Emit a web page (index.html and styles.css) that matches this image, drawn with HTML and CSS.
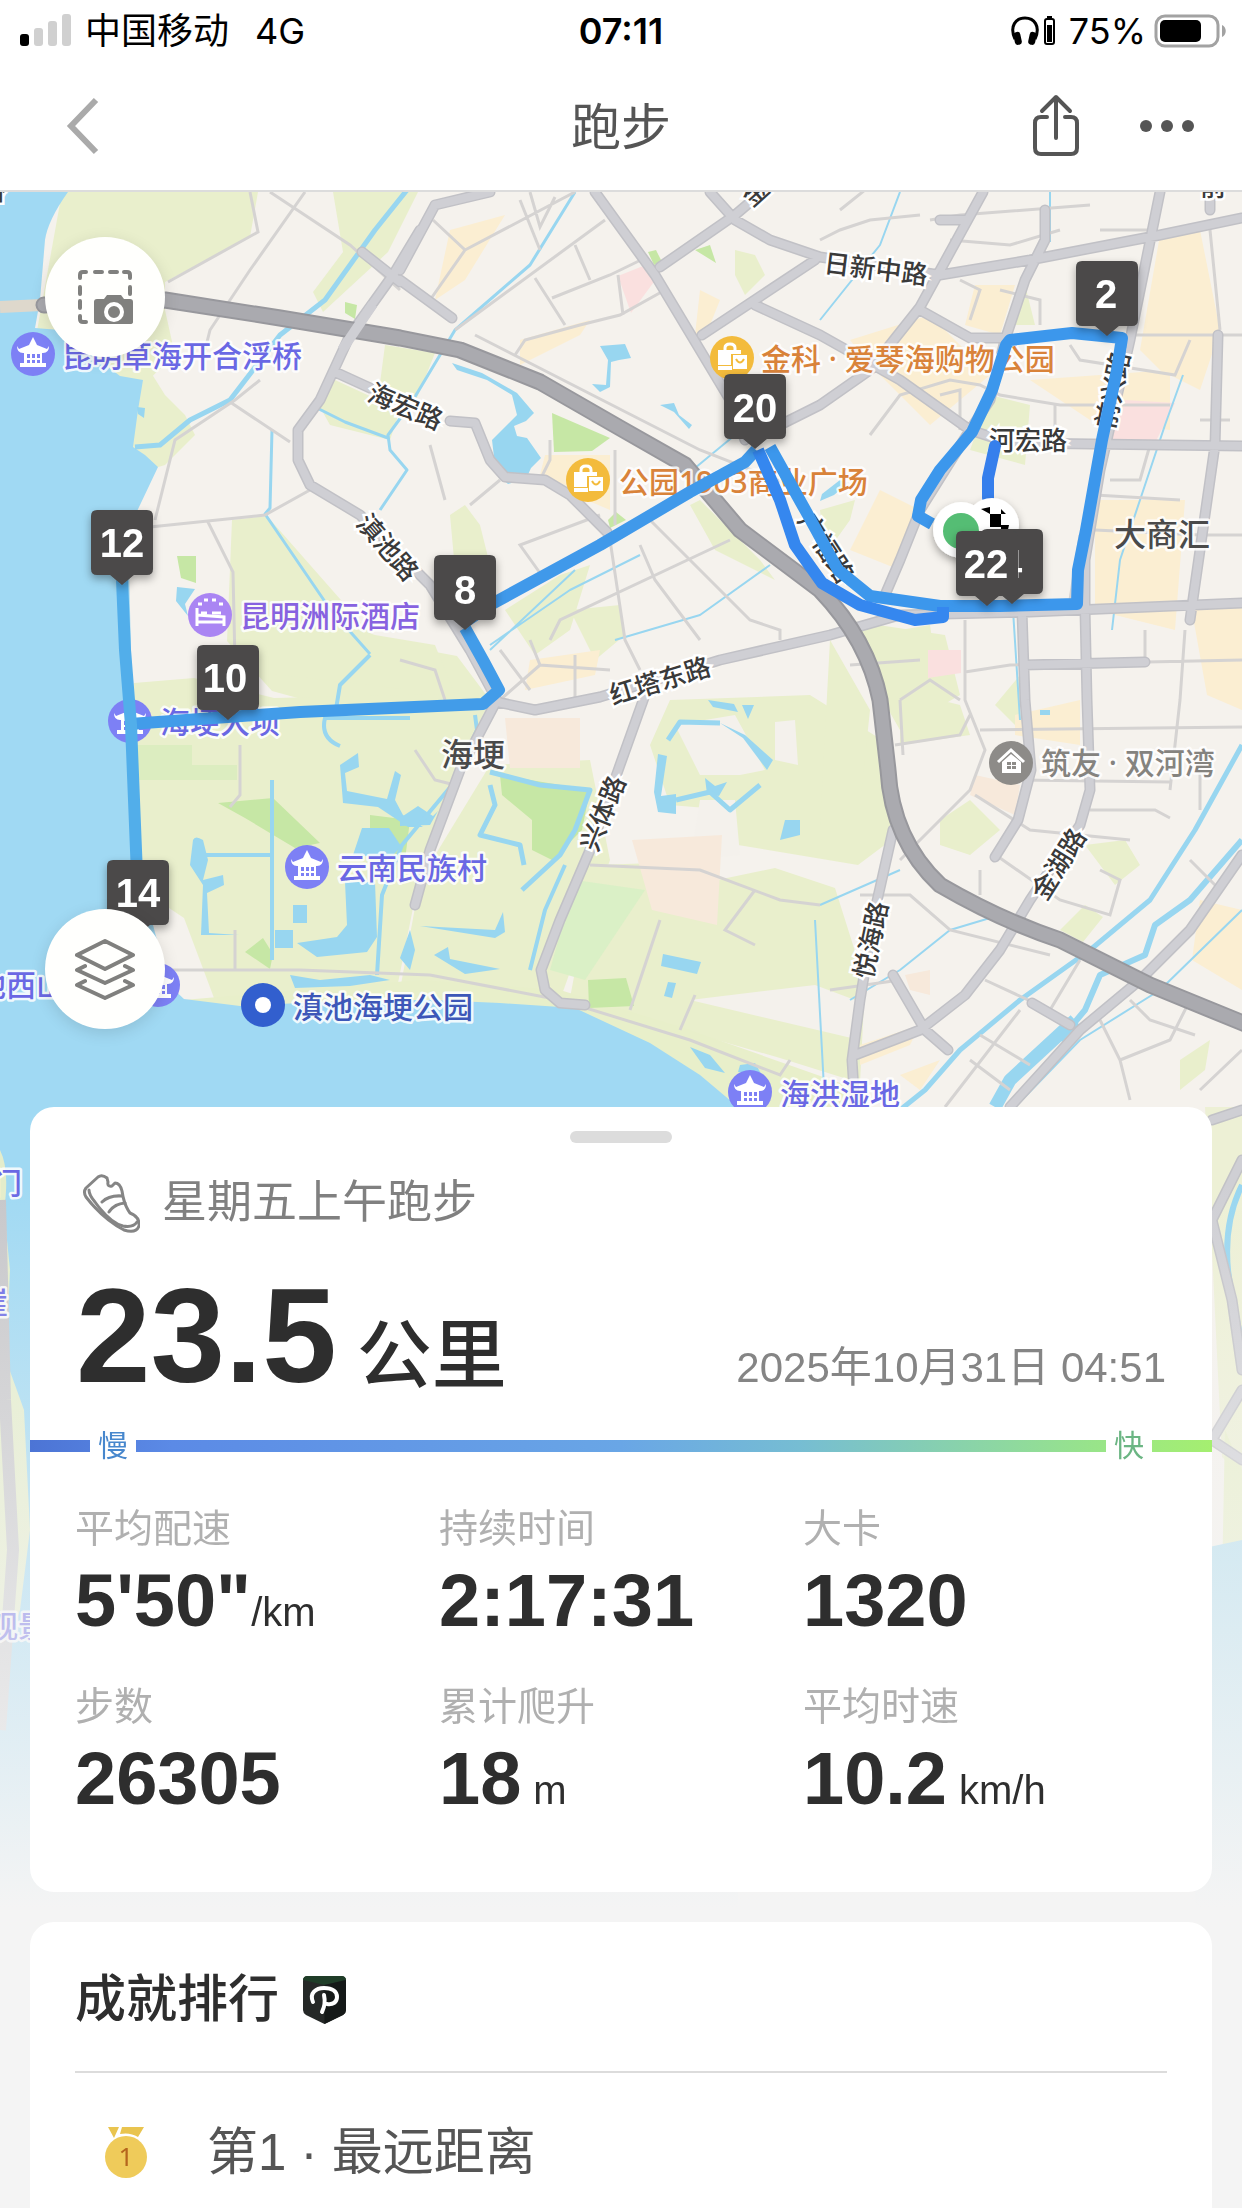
FILE: index.html
```html
<!DOCTYPE html>
<html lang="zh-CN">
<head>
<meta charset="utf-8">
<meta name="viewport" content="width=device-width, initial-scale=1">
<title>跑步</title>
<link rel="stylesheet" href="styles.css">
</head>
<body>
<div class="status">
  <div class="status-side">
    <svg class="signal" width="51" height="34" viewBox="0 0 51 34" aria-hidden="true">
      <rect x="0" y="20" width="9" height="12" rx="3" fill="#000"/>
      <rect x="14" y="14" width="9" height="18" rx="3" fill="#d0d0d0"/>
      <rect x="28" y="7" width="9" height="25" rx="3" fill="#d0d0d0"/>
      <rect x="42" y="0" width="9" height="32" rx="3" fill="#d0d0d0"/>
    </svg>
    <span>中国移动</span>
    <span class="network">4G</span>
  </div>
  <time class="clock">07:11</time>
  <div class="status-side status-end">
    <svg width="46" height="32" viewBox="0 0 46 32" aria-hidden="true">
      <path d="M4 24C-2 11 5 3 14 3s16 8 10 21" fill="none" stroke="#000" stroke-width="3"/>
      <rect x="3" y="17" width="7" height="13" rx="3" transform="rotate(-12 6 23)"/>
      <rect x="18" y="17" width="7" height="13" rx="3" transform="rotate(12 22 23)"/>
      <rect x="34" y="4" width="9" height="25" rx="2" fill="none" stroke="#000" stroke-width="2"/>
      <rect x="36" y="1" width="5" height="3"/><rect x="36" y="10" width="5" height="17"/>
    </svg>
    <span class="percent">75%</span>
    <svg width="74" height="34" viewBox="0 0 74 34" aria-hidden="true">
      <rect x="2" y="2" width="62" height="30" rx="9" fill="none" stroke="#a2a2a2" stroke-width="3"/>
      <rect x="6" y="6" width="41" height="22" rx="5"/>
      <path d="M68 11c5 2 5 10 0 12z" fill="#a2a2a2"/>
    </svg>
  </div>
</div>

<header class="nav">
  <button class="icon-button back" type="button" aria-label="返回">
    <svg width="36" height="60" viewBox="0 0 36 60"><path d="M30 4 5 30l25 26" fill="none" stroke="#aaa" stroke-width="6"/></svg>
  </button>
  <h1>跑步</h1>
  <div class="nav-actions">
    <button class="icon-button" type="button" aria-label="分享">
      <svg width="48" height="64" viewBox="0 0 48 64"><g fill="none" stroke="#555" stroke-width="4" stroke-linecap="round" stroke-linejoin="round"><path d="M15 23H9q-6 0-6 6v25q0 6 6 6h30q6 0 6-6V29q0-6-6-6h-6"/><path d="M24 44V4M10 17 24 3l14 14"/></g></svg>
    </button>
    <button class="icon-button" type="button" aria-label="更多">
      <svg width="54" height="14" viewBox="0 0 54 14" fill="#555"><circle cx="6" cy="7" r="6"/><circle cx="27" cy="7" r="6"/><circle cx="48" cy="7" r="6"/></svg>
    </button>
  </div>
</header>

<main class="stage">
<svg class="map" viewBox="0 192 1242 1716" role="img" aria-label="跑步路线地图">
  <defs>
    <g id="temple"><circle r="22" fill="#7d80f5"/><path d="M0-17 4-9 14-5 16-8q0 7-6 7H9V9h4v4h-26V9h4V-1h-1q-6 0-6-7l2 3 10-4z" fill="#fff"/><path d="M-6 0h3v4h-3zM-1 0h3v4h-3zM4 0h3v4H4zM-6 6h3v3h-3zM-1 6h3v3h-3zM4 6h3v3H4z" fill="#7d80f5"/></g>
    <g id="shop"><circle r="22" fill="#f3bb3c"/><path d="M-7-8v-2q0-4 5-4t5 4v2" fill="none" stroke="#fff" stroke-width="3"/><path d="M-14-8H9v4H-1V7h-13z" fill="#fff"/><path d="M-14 8H0v4h-14zM1-3h14v14H1z" fill="#fff"/><path d="M4 1q4 7 8 0" fill="none" stroke="#f3bb3c" stroke-width="2"/></g>
    <g id="pin"><path d="M-25-75h50q6 0 6 6v53q0 6-6 6H12L0 0-12-10h-13q-6 0-6-6v-53q0-6 6-6z" fill="#4b4a4a"/></g>
    <linearGradient id="fade" x1="0" y1="0" x2="0" y2="1"><stop offset="0" stop-color="#f4f4f4" stop-opacity="0"/><stop offset="1" stop-color="#f4f4f4"/></linearGradient>
    <filter id="shade" x="-30%" y="-30%" width="160%" height="170%"><feDropShadow dx="0" dy="4" stdDeviation="4" flood-opacity=".35"/></filter>
  </defs>
  <rect y="192" width="1242" height="1716" fill="#f5f2ed"/>

  <!-- parks and fields -->
  <g fill="#e9efcc">
    <path d="M62 192h196l-8 45-85 45v28l10 45-30 28-22 90-90-120z"/>
    <path d="M140 355l25 40 20 20 10 20-30 30-40 12z"/>
    <path d="M333 192h85l-30 60-65 60-10-20 30-40z"/>
    <path d="M335 380l65 30-10 30-60-15-10-18zM385 345l50 8-20 50-35-20z"/>
    <path d="M232 520l35-4 110 125 80 15 30 40-160 10-55-15-45-50z"/>
    <path d="M134 683l60-5 80 20 220-5-45 90-35 120-20 100-180-5-30-80-45-30z"/>
    <path d="M240 670l75-55 60 20 60 10 20 50z"/>
    <path d="M505 610l55-35 30-10-20 65-35 25zM570 610l50-5 5 30-30 25z"/>
    <path d="M490 765l100-5 20 100-50 140-160-10 20-110z"/>
    <path d="M450 515l15-10 15 20 15 60-40-15z"/>
    <path d="M670 700l140-5 80 50 8 90-40 30-120-20-8-35-60-5-20-60z"/>
    <path d="M595 865l60-2 0 30 120-25 60 20 30 95-5 100-80-25-210-60z"/>
    <path d="M845 620l100 15 15 60-60 35-40-70zM830 640l40 70-10 95-40 20zM900 690l60 15 10 30-70 10z"/>
    <path d="M995 705l25-30v55zM940 820l30-20 30 30-30 25-30-10zM1085 845l40-5 15 25-25 20zM1060 930l25-25 18 12-20 25z"/>
    <path d="M735 250l20 5 10 20-20 20-10-20zM820 510l35-10-5 20-25 35zM700 500l60 60 15 20-60-30-25-45zM1005 325l20-40 10 40zM990 395l40 10-5 60-55-15z"/>
    <path d="M870 635l60-10 5 35-60 5zM1180 1060l30-20-5 30-25 20z"/>
  </g>
  <path d="M160 1002 300 990 420 980 560 990 690 1030 860 1090V1110H738L700 1080 600 1030 500 1020 160 1020z" fill="#e8efca"/>
  <path d="M675 725 735 715 765 770 740 775 700 775zM690 860 740 855 735 800 700 800zM775 722 795 720 798 765 775 760zM815 985 855 1000 860 1040 690 1000z" fill="#f4f1ec"/>
  <g fill="#c6e7a5">
    <path d="M552 413l58 25-18 13-38 1z"/><path d="M177 556h19v27l-15-5z"/><path d="M218 803l55-5 47 45-25 5-50-30z"/>
    <path d="M500 775l90 15-8 40-30 30-20-10 0-30-30-25z"/><path d="M370 815l40 5-5 40-35-10z"/><path d="M245 952l18-14 10 16-3 15z"/><path d="M588 980l38-2 8 28-45 2z"/>
    <path d="M648 252l8-2 6 12-8 3zM695 250l15-5 6 18zM345 302l12 3-2 14-10-6zM608 520l8-8 10 8-16 8z"/>
  </g>
  <path d="M137 745h55v20h45v15H137z" fill="#dcedc0"/><path d="M575 880l70 10-60 90-35-10z" fill="#daf0c6"/>
  <g fill="#fbeed2">
    <path d="M450 230l55-15-40 65-30 20zM520 340l70-20-10 15-60 30zM545 455l65 0v55l-35-15-10-10-25-10zM530 660l70-10-5 25-70 15zM700 290l20 10-10 25-15 10z"/>
    <path d="M1160 235l40-5 20 100-20 60-40-20-20-20zM975 285l40 0-15 50-35-10zM1030 380l140-10 0 60-80-10zM850 340l80-25 60 60-60 50-60-60zM1095 500h90l-10 130-80-20zM1190 600h52v110l-35-15zM880 490l40 20-20 60-50-20zM1200 900l42 10v80l-50-30zM1015 715l65-15v45l-65-10z"/>
    <path d="M860 1045l60-20-10 20-50 20zM900 1075l40-15-20 30z"/>
  </g>
  <path d="M618 276l30-12 8 15-25 34zM1125 400l50 3-20 40-45 0zM928 650h33v23l-33 5z" fill="#fae0df"/>
  <path d="M505 718h75v50h-70zM632 840l90-5-5 90-65-15zM975 775l45 10-5 30-45-20zM905 975l25-5v25l-20-5z" fill="#f7e9db"/>

  <!-- lake -->
  <path d="M0 192h68Q48 220 45 240L40 300l-5 28 25 2 60 46 23 4-5 30-5 37 12 8 13 12-18 38-12 25 5 200 8 150 28 105 15 14L240 1006 300 1003 380 1000 433 1000 500 1003 575 1008 605 1022 650 1043 700 1075 738 1107V1908H0z" fill="#a0d9f3"/>
  <path d="M0 1150q10 20 4 60l6 60-4 90 18 50 6 120-10 80-20 60z" fill="#e4edcb"/>
  <path d="M1205 1107h37v370l-20-20-17-350z" fill="#edf0d5"/><path d="M1225 1430l17 40v160l-20-50z" fill="#e8efca"/>
  <path d="M1195 1550l47-10v368h-47z" fill="#b5dfef"/>

  <!-- ponds and rivers -->
  <g fill="#98d6f0">
    <path d="M452 363l30 10 35 20 17 20-8 8-12 5 3 10 10 2 7 10 7 10-10 10-5 11-18 5-12-10-4-34 25-25-5-20-25-15-30-10z"/>
    <path d="M600 346l25-2 6 14-12 2-8 2-1 25-10 5-8-8 14 1 2-25z"/><path d="M660 405l14-2 5 12 13 10-3 4-15-17z"/>
    <path d="M177 587l18 2-10 15 3 12-12-15z"/><path d="M137 407l8 1-1 10-6-4z"/><path d="M822 494l18-14 8 3-14 12-14 6z"/>
    <path d="M362 828l27 0 12 18-10 12-38-3z"/><path d="M345 882l30 0 2 55-10 15-50 5-20-14 40-6 10-12z"/>
    <path d="M275 930h18v18h-18zM293 905h14v18h-14z"/><path d="M663 954l38 8-4 12-36-8zM668 982l8 1-4 15-8-2z"/>
    <path d="M340 765l18-12 1 14-14 6 2 18 40 8 8-28 6 4-6 25 8 15 20 12-15 0-30-20-35-4z"/>
    <path d="M193 840q2-5 10 0l5 20-5 20 20-5 1 10-17 8 2 40 30 2-38 0 2-50-13-20z"/>
    <path d="M410 930l5 20-5 20-10-12zM434 955l14-8 2 12 30 6 20 4-35 5z"/><path d="M290 975l30 5 50-5 20 5-40 6-55 2z"/>
    <path d="M420 926l75 4 8-18 2 20-10 6zM418 806l-18 12 0 8 30-1 8-14-5 5z"/>
    <path d="M708 700l26 4 4 8-25-5zM742 705h12l-6 14zM720 723l25 12 28 25-6 10-24-32z"/>
    <path d="M658 754l9 2-6 40 15-2 0 20-18-2-4-20z"/><path d="M785 820l15 0 0 15-20 5zM705 778l10 8 12-4-8 14-12-2z"/>
    <path d="M690 1047l20 8 15 18-20-5zM740 1065l15-2 8 14-25-5z"/>
    <path d="M1040 710h10v5h-10z"/>
  </g>
  <g fill="none" stroke="#98d6f0" stroke-linejoin="round">
    <path d="M407 190 375 230 325 300 280 335 230 400 190 420 160 445 135 447" stroke-width="5"/>
    <path d="M575 192 530 265 455 330 410 405 388 435 390 450 407 470 380 510M315 407 345 422 388 438M272 430l-2 78-5 6 65 95 40 45" stroke-width="3"/>
    <path d="M490 785 495 805 480 835 520 845 524 865M490 772 540 785 590 790 575 830 560 855 522 890M668 740 680 722 720 723M676 800 710 792 730 810 760 785" stroke-width="5"/>
    <path d="M565 865 545 910 530 970M272 780v180M205 855h65M410 718H325q-5 20 15 28M475 715l2 15-25 55-50 60-20 50-5 80M370 655l-30 30-5 30" stroke-width="4"/>
    <path d="M900 192 880 245 840 295 820 320M1050 192v50M735 435 695 468M490 645 570 590 640 555M1183 375 1165 425 1140 500 1120 560 1112 630M575 570l-85 80M615 640 700 615 770 565M1013 610 1020 720" stroke-width="2"/>
    <path d="M1242 745 1195 830 1150 900 1090 950 1020 1000 960 1050 925 1090 900 1110" stroke-width="5"/>
    <path d="M1242 840 1190 900 1155 925 1145 955 1100 975 1085 1010 1060 1040" stroke-width="6"/>
    <path d="M1075 1020 1010 1080 995 1107" stroke-width="13"/>
    <path d="M1242 910 1160 990 1080 1040 1015 1107M820 905 900 870M1000 915 950 930 900 970 850 1000M815 920 825 1107" stroke-width="2"/>
    <path d="M1242 1185q-25 50-8 120l8 40" stroke-width="6"/>
  </g>

  <!-- minor streets -->
  <g fill="none" stroke="#d5d3d2" stroke-width="3">
    <path d="M305 192 250 270 210 330 205 350M250 192l8 40-90 50M270 192 350 245 400 290M150 527l115-12 45-25M208 522l25 50 2 90M155 520l20-80 60-40 25-20M230 402l60 40"/>
    <path d="M433 220 465 250 430 300M465 250 575 192M455 330 605 220M520 200 540 250M530 192l10 35 15-30M535 278 565 325M552 298 610 275 645 258M575 245 590 280M515 355 525 340 580 325 620 315 665 290M475 335 700 450 790 485M618 275l5 40M540 480l10-20 0-20M615 450v75M430 445 445 500M500 480 470 505M610 540 625 640 640 670M650 520 750 620 780 630 780 640M600 515 520 545 545 580M640 545 655 580 700 640M730 540 560 620 550 640"/>
    <path d="M400 660 435 670 445 700M500 650 530 690M530 640 540 665 610 670M575 655v50M500 700 540 665M240 745v50l-10 12M160 970 300 970 430 975 560 1000 690 1040 780 1075 790 1060M235 930v40M590 865 700 870 780 900 820 905M755 890 725 930 755 945M660 920 630 1010M415 750l20 30 20 5M695 995l-15 35"/>
    <path d="M820 240 840 230 870 220 920 215M840 210l25-20M930 220 960 215 1090 205M950 240 1010 245 1060 230M960 280 980 290 970 320M1000 290 1040 300 1040 325M870 435 900 395 950 380 980 385 1000 395 1060 405 1170 405M1070 345 1080 360 1175 375 1190 340M1055 405V450M960 430v-40l-20 5M1100 335H1242M1095 495 1180 500M1110 480 1140 480 1150 445M1210 230 1220 330M1150 230h-50M1200 420h30M1095 530 1200 535 1242 535M1080 535 1070 600"/>
    <path d="M965 620 965 700 985 750 970 790 930 830 900 860M850 665 920 660M965 672 1010 665 1242 660M895 745 960 735 970 715M980 730 1242 727M975 795 1030 830 1130 840M900 700 930 680 960 700M900 700l3 55M1185 630 1180 700 1170 790M1000 858 1060 900 1110 915 1120 880 1100 870M980 870 980 895M1145 630v30M1090 810h65l15 8M860 895 910 895 950 930 1050 955M830 990 900 980M1020 780 1170 782M1200 760v50"/>
    <path d="M985 980 1050 1010 1080 960M1030 1065 980 1035M1100 1020 1120 1060 1130 1100M1130 1000 1150 1020 1195 1035M1120 1060 1170 1040 1190 1000M1010 1090 970 1060M1190 860 1220 890M1242 1050 1200 1090M945 1107 1020 1010"/>
  </g>

  <!-- main roads: edge, then surface -->
  <g fill="none" stroke="#c1c1c6" stroke-width="11" stroke-linejoin="round" stroke-linecap="round">
    <path id="majors" d="M420 230 393 275 350 335 320 400 298 430V460L310 485 360 515 430 585 470 650 497 700 460 770 430 850 415 905M497 702 535 710 600 697 720 660 830 635 900 615 1030 612 1242 603M645 695 620 765 590 850 560 920 541 970 545 990 560 1003 585 1005M595 192 655 275 700 350 730 400 745 440M710 192 735 220 770 240 820 257 940 275 1030 260 1160 235 1242 218M660 267 735 215 755 198M702 335 815 260M755 305 820 335 900 380 970 430 1010 443 1242 446M983 192 920 307 870 370 820 405 780 425M1045 210V240L1025 280 1005 340 990 400 970 430 920 510 900 560 885 595M1160 192 1130 340 1100 470 1085 560V610L1087 700 1090 790 1080 825 1030 900 1000 950 965 995 920 1030 855 1055M920 310 970 338 1005 338M1218 335 1215 445 1190 620M1022 612 1025 700 1031 770 1018 820 995 857M893 830 875 910 860 1000 852 1060 855 1107M435 205 400 270M400 280 452 318M362 252 400 282M335 372 370 388M450 421 475 423 490 460 505 477 545 480 570 495 607 532M893 975 925 1030 948 1050M1032 1003 1070 1025M1024 665 1145 662M1242 855 1190 930 1140 980 1080 1030 1010 1107M1210 210V192M940 220h25M490 192 435 205M1242 1110 1212 1120M1242 1160 1212 1220 1232 1300 1242 1370M1242 1390 1212 1440 1242 1460"/>
  </g>
  <use href="#majors" fill="none" stroke="#cfcfd4" stroke-width="8" stroke-linejoin="round" stroke-linecap="round"/>
  <path d="M0 307 42 305" stroke="#ded8cc" stroke-width="12"/>
  <path d="M44 305 165 300 280 318 400 338 460 350 540 382 620 428 685 465 740 530 820 590Q868 640 880 700L888 770Q892 840 940 885 1000 920 1060 940L1150 985 1260 1030" fill="none" stroke="#98989d" stroke-width="17" stroke-linejoin="round" stroke-linecap="round"/>
  <path d="M44 305 165 300 280 318 400 338 460 350 540 382 620 428 685 465 740 530 820 590Q868 640 880 700L888 770Q892 840 940 885 1000 920 1060 940L1150 985 1260 1030" fill="none" stroke="#aaaaaf" stroke-width="13" stroke-linejoin="round" stroke-linecap="round"/>
  <path d="M373 304 342 350" stroke="#cfcfd4" stroke-width="10"/>
  <path d="M0 1200l5 200 8 150-13 180" fill="none" stroke="#c7c7ca" stroke-width="12"/>

  <!-- places -->
  <g class="poi poi-sight">
    <use href="#temple" x="33" y="354"/><text x="62" y="367">昆明草海开合浮桥</text>
    <use href="#temple" x="130" y="721"/><text x="160" y="733">海埂大坝</text>
    <use href="#temple" x="307" y="867"/><text x="337" y="879">云南民族村</text>
    <use href="#temple" x="750" y="1092"/><text x="780" y="1105">海洪湿地</text>
    <use href="#temple" x="158" y="985"/><text x="-24" y="996">池西山</text>
    <text x="-8" y="1194">门</text><text x="-22" y="1313">崖</text><text x="-12" y="1637">观景</text>
  </g>
  <g class="poi poi-hotel">
    <circle cx="210" cy="615" r="22" fill="#aa85f3"/><path d="M197 608v18m0-4h27m0 4v-9l-27-2" fill="none" stroke="#fff" stroke-width="3"/><path d="M201 613h6M212 613h9M198 604h4M204 600h4M212 600h4M219 604h4" stroke="#fff" stroke-width="3"/>
    <text x="240" y="627">昆明洲际酒店</text>
  </g>
  <g class="poi poi-shop">
    <use href="#shop" x="732" y="358"/><text x="761" y="370">金科 · 爱琴海购物公园</text>
    <use href="#shop" x="588" y="480"/><text x="619" y="493">公园1903商业广场</text>
  </g>
  <g class="poi poi-home">
    <circle cx="1011" cy="763" r="22" fill="#8d8b88"/><path d="M998 762l13-12 13 12" fill="none" stroke="#fff" stroke-width="3"/><path d="M1002 762l9-8 10 8v11h-19z" fill="#fff"/><path d="M1007 762h4v3h-4zM1012 762h4v3h-4zM1007 766h4v3h-4zM1012 766h4v3h-4z" fill="#8d8b88"/>
    <text x="1041" y="774">筑友 · 双河湾</text>
  </g>
  <g class="poi poi-metro"><circle cx="263" cy="1005" r="22" fill="#325fce"/><circle cx="263" cy="1005" r="8" fill="#fff"/><text x="293" y="1018">滇池海埂公园</text></g>
  <g class="poi poi-area"><text x="1114" y="546">大商汇</text><text x="441" y="766">海埂</text></g>

  <g class="street">
    <text x="823" y="272" transform="rotate(7 823 272)">日新中路</text>
    <text x="366" y="400" transform="rotate(23 366 400)">海宏路</text>
    <text x="355" y="524" transform="rotate(49 355 524)">滇池路</text>
    <text x="613" y="705" transform="rotate(-17 613 705)">红塔东路</text>
    <text x="597" y="853" transform="rotate(-68 597 853)">兴体路</text>
    <text x="1046" y="902" transform="rotate(-58 1046 902)">金湖路</text>
    <text x="872" y="980" transform="rotate(-78 872 980)">悦海路</text>
    <text x="1114" y="430" transform="rotate(-78 1114 430)">前兴路</text>
    <text x="797" y="520" transform="rotate(57 797 520)">广福路</text>
    <text x="989" y="450">河宏路</text>
    <text x="752" y="208" transform="rotate(-42 752 208)">金</text>
    <text x="1200" y="196">前</text><text x="-20" y="200">桥</text>
  </g>

  <!-- route -->
  <g fill="none" stroke="#3c97ec" stroke-width="12" stroke-linejoin="round">
    <path d="M932 524 918 516 921 500 940 470 972 432 992 390 1006 345 1010 340 1072 333 1122 338 1117 370 1102 440 1086 530 1078 570 1077 604 1000 606 940 606 870 596 838 570 808 515 770 447"/>
    <path d="M756 450 745 462 690 492 600 545 490 605 465 622" stroke="#4099ea"/>
    <path d="M465 628 484 662 499 690 483 704 300 712 130 724" stroke="#429ce9"/>
    <path d="M122 580 125 650 131 725 138 900" stroke="#52aeea"/>
    <path d="M758 450 780 500 795 545 822 583 860 605 915 620 943 617 943 607" stroke="#3587ef"/>
    <path d="M995 446 988 478 988 498" stroke="#367fec" stroke-linecap="round"/>
  </g>
  <g filter="url(#shade)"><circle cx="992" cy="525" r="27" fill="#fff"/><circle cx="961" cy="530" r="28" fill="#fff"/></g>
  <path d="M981 509l9-2v7zM990 514h11v13h-11zM1001 514v-5l5 5zM1001 525h8l-2 9h-6z"/>
  <circle cx="961" cy="531" r="18" fill="#55bd74"/>

  <g class="km" filter="url(#shade)">
    <use href="#pin" x="122" y="585"/><text x="122" y="557">12</text>
    <use href="#pin" x="228" y="720"/><text x="225" y="692">10</text>
    <use href="#pin" x="138" y="935"/><text x="138" y="907">14</text>
    <use href="#pin" x="465" y="630"/><text x="465" y="604">8</text>
    <use href="#pin" x="755" y="449"/><text x="755" y="422">20</text>
    <use href="#pin" x="1107" y="336"/><text x="1106" y="308">2</text>
    <use href="#pin" x="1012" y="604"/><text x="1000" y="578">24</text>
    <use href="#pin" x="987" y="606"/><text x="986" y="578">22</text>
  </g>
  <rect y="1180" width="1242" height="728" fill="url(#fade)"/>
</svg>

<div class="content">
  <div class="map-controls">
    <button class="round" type="button" aria-label="截图">
      <svg width="56" height="56" viewBox="0 0 56 56"><g fill="none" stroke="#80807e" stroke-width="4" stroke-linecap="round"><path d="M3 9V6q0-3 3-3h3M18 3h7M33 3h7M47 3h3q3 0 3 3v3M53 18v7M3 18v7M3 32v7M3 47v3q0 3 3 3h3"/></g><path d="M17 33q0-3 3-3h7l3-4h14l3 4h6q3 0 3 3v20q0 2-3 2H20q-3 0-3-2z" fill="#80807e"/><circle cx="37" cy="43" r="8" fill="none" stroke="#fff" stroke-width="4"/></svg>
    </button>
    <button class="round" type="button" aria-label="图层">
      <svg width="62" height="64" viewBox="0 0 62 64"><g fill="none" stroke="#80807e" stroke-width="4" stroke-linejoin="round" stroke-linecap="round"><path d="M31 4 59 18 31 32 3 18zM11 29l-8 4 28 13 28-13-8-4M11 44l-8 4 28 13 28-13-8-4"/></g></svg>
    </button>
  </div>

  <section class="card summary">
    <div class="handle"></div>
    <h2 class="activity">
      <svg width="58" height="60" viewBox="0 0 58 60" aria-hidden="true"><g fill="none" stroke="#858585" stroke-width="3" stroke-linejoin="round" stroke-linecap="round"><path d="M4 15 16 4q4-3 9 1l1 4q-1 5 4 4l3-3q5 0 7 8 2 14 8 22 10 4 9 13-3 8-15 4Q21 46 4 24q-3-5 0-9z"/><path d="M7 17q0 5 6 12 15 21 28 24 10 2 14-4M20 29q7-7 20-6M27 39q5-8 16-9"/></g></svg>
      <span>星期五上午跑步</span>
    </h2>
    <div class="headline">
      <p class="distance">23.5 <span>公里</span></p>
      <time class="date" datetime="2025-10-31T04:51">2025年10月31日 04:51</time>
    </div>
    <div class="pace"><span class="slow">慢</span><span class="fast">快</span></div>
    <dl class="stats">
      <div><dt>平均配速</dt><dd>5'50"<small>/km</small></dd></div>
      <div><dt>持续时间</dt><dd>2:17:31</dd></div>
      <div><dt>大卡</dt><dd>1320</dd></div>
      <div><dt>步数</dt><dd>26305</dd></div>
      <div><dt>累计爬升</dt><dd>18<small class="spaced">m</small></dd></div>
      <div><dt>平均时速</dt><dd>10.2<small class="spaced">km/h</small></dd></div>
    </dl>
  </section>

  <section class="card awards">
    <h2 class="awards-title">成就排行
      <svg width="43" height="48" viewBox="0 0 43 48" aria-hidden="true"><path d="M5 0h33q5 0 5 5v29q0 3-3 5L21.500 48 3 39q-3-2-3-5V5q0-5 5-5z" fill="#252827"/><path d="M5 0h33q5 0 5 4L21.500 9 0 4q0-4 5-4z" fill="#1f3d28"/><path d="M21.500 9 43 4v30q0 3-3 5l-18.500 9z" fill="#151918"/><path d="M10 26c-4-9 3-14 11-14 9 0 13 4 13 9s-4 8-10 7M21 19q2 9-2 17" fill="none" stroke="#fff" stroke-width="4" stroke-linecap="round"/></svg>
    </h2>
    <ul class="award-list">
      <li>
        <svg width="42" height="52" viewBox="0 0 42 52" aria-hidden="true"><path d="M3 0h11l-5 11zM17 0h22l-6 10q-8-5-18-3z" fill="#e9c44f"/><circle cx="21" cy="30" r="21" fill="#efcb5a"/><text x="21" y="39" class="medal-number">1</text></svg>
        <span>第1 · 最远距离</span>
      </li>
    </ul>
  </section>
</div>
</main>
</body>
</html>
```
FILE: styles.css
```css
* { box-sizing: border-box; }

body {
  margin: 0;
  min-height: 100vh;
  background: #f4f4f4;
  color: #2e2e2e;
  font-family: "Liberation Sans", "Noto Sans CJK SC", sans-serif;
  display: flex;
  flex-direction: column;
}

h1, h2, p, dl, dd, ul { margin: 0; padding: 0; }
h1, h2 { font-weight: 400; }
button { border: 0; padding: 0; background: none; font: inherit; }
svg { display: block; flex: none; }

/* Status bar */
.status {
  display: grid;
  grid-template-columns: 1fr auto 1fr;
  align-items: center;
  height: 62px;
  padding: 0 14px;
  background: #fff;
  color: #000;
  font-family: Inter, "Noto Sans CJK SC", sans-serif;
  font-size: 36px;
  line-height: 48px;
}
.status-side { display: flex; align-items: center; }
.signal { margin: 0 14px 0 6px; }
.network { margin-left: 26px; }
.clock { font-weight: 600; }
.status-end { justify-content: flex-end; }
.percent { margin: 0 8px 0 12px; }

/* Navigation bar */
.nav {
  display: grid;
  grid-template-columns: 1fr auto 1fr;
  align-items: center;
  height: 130px;
  padding: 0 48px;
  background: #fff;
  border-bottom: 2px solid #dcdcdc;
}
.nav h1 { padding-top: 4px; font-size: 50px; line-height: 60px; color: #555; }
.back { margin-left: 18px; }
.icon-button { display: flex; align-items: center; min-height: 64px; }
.nav-actions { display: flex; justify-content: flex-end; gap: 60px; }

/* Map */
.stage { position: relative; flex: 1; display: flex; flex-direction: column; overflow: hidden; }
.map { position: absolute; top: 0; left: 0; width: 100%; }
.poi { font: 500 30px "Noto Sans", "Noto Sans CJK SC", sans-serif; }
.poi text { stroke: #fff; stroke-width: 5px; stroke-opacity: .85; stroke-linejoin: round; paint-order: stroke; }
.poi-sight text { fill: #6a68e4; }
.poi-hotel text { fill: #8762e0; }
.poi-shop text { fill: #d9833a; }
.poi-home text { fill: #85837f; }
.poi-metro text { fill: #3d57b8; }
.poi-area text { fill: #4a4a4a; font-size: 32px; }
.street text {
  font: 500 26px "Noto Sans CJK SC", sans-serif;
  fill: #3a3a3a;
  stroke: #fff;
  stroke-width: 5px;
  paint-order: stroke;
}
.km text {
  font: 700 40px "Liberation Sans Narrow", "Liberation Sans", sans-serif;
  fill: #fff;
  text-anchor: middle;
}

.content { position: relative; flex: 1; display: flex; flex-direction: column; padding: 0 30px; }
.map-controls {
  display: flex;
  flex-direction: column;
  justify-content: space-between;
  min-height: 915px;
  padding: 45px 15px 78px;
}
.round {
  display: flex;
  align-items: center;
  justify-content: center;
  width: 120px;
  height: 120px;
  border-radius: 50%;
  background: #fffffd;
  box-shadow: 0 4px 16px rgba(0, 0, 0, .12);
}

/* Cards */
.card { background: #fff; border-radius: 24px; }
.summary { padding: 24px 0 63px; }
.handle { width: 102px; height: 12px; margin: 0 auto; border-radius: 6px; background: #dcdcdc; }
.activity {
  display: flex;
  align-items: center;
  gap: 22px;
  margin-top: 30px;
  padding: 0 52px;
  font-size: 45px;
  line-height: 60px;
  color: #808080;
}
.headline {
  display: flex;
  justify-content: space-between;
  align-items: baseline;
  margin-top: 23px;
  padding: 0 46px;
}
.distance {
  display: flex;
  align-items: baseline;
  gap: 20px;
  font: 700 134px/160px "Liberation Sans Narrow", "Liberation Sans", sans-serif;
}
.distance span { font: 500 75px/80px "Noto Sans CJK SC", sans-serif; }
.date { font-size: 42px; line-height: 60px; color: #858585; }

.pace {
  display: flex;
  justify-content: space-between;
  align-items: center;
  margin-top: 14px;
  padding: 0 60px;
  background: linear-gradient(90deg, #4c74d5, #5b8ae6 12%, #69a6e6 50%, #76bdd3 65%, #98e48a 90%, #a5ef70) center / 100% 12px no-repeat;
  font-size: 30px;
  line-height: 32px;
}
.pace span { padding: 0 8px; background: #fff; }
.slow { color: #4787cd; }
.fast { color: #6bb583; }

.stats {
  display: grid;
  grid-template-columns: repeat(3, 1fr);
  gap: 36px 0;
  margin-top: 47px;
  padding: 0 45px;
}
.stats dt { font-size: 39px; line-height: 40px; color: #b0b0b0; }
.stats dd {
  margin-top: 2px;
  font: 700 74px/100px "Liberation Sans Narrow", "Liberation Sans", sans-serif;
}
.stats small { font-size: 40px; font-weight: 400; line-height: 40px; }
.stats .spaced { margin-left: 12px; }

.awards { flex: 1; margin-top: 30px; padding: 0 45px; border-radius: 24px 24px 0 0; }
.awards-title {
  display: flex;
  align-items: center;
  gap: 24px;
  padding: 52px 0 46px;
  border-bottom: 2px solid #dcdcdc;
  font-size: 51px;
  font-weight: 500;
  line-height: 51px;
}
.award-list { list-style: none; }
.award-list li {
  display: flex;
  align-items: center;
  gap: 60px;
  padding: 54px 30px 29px;
  font-size: 51px;
  line-height: 52px;
  color: #555;
}
.medal-number { font: 26px "Noto Sans", sans-serif; fill: #b5651d; text-anchor: middle; }
```
